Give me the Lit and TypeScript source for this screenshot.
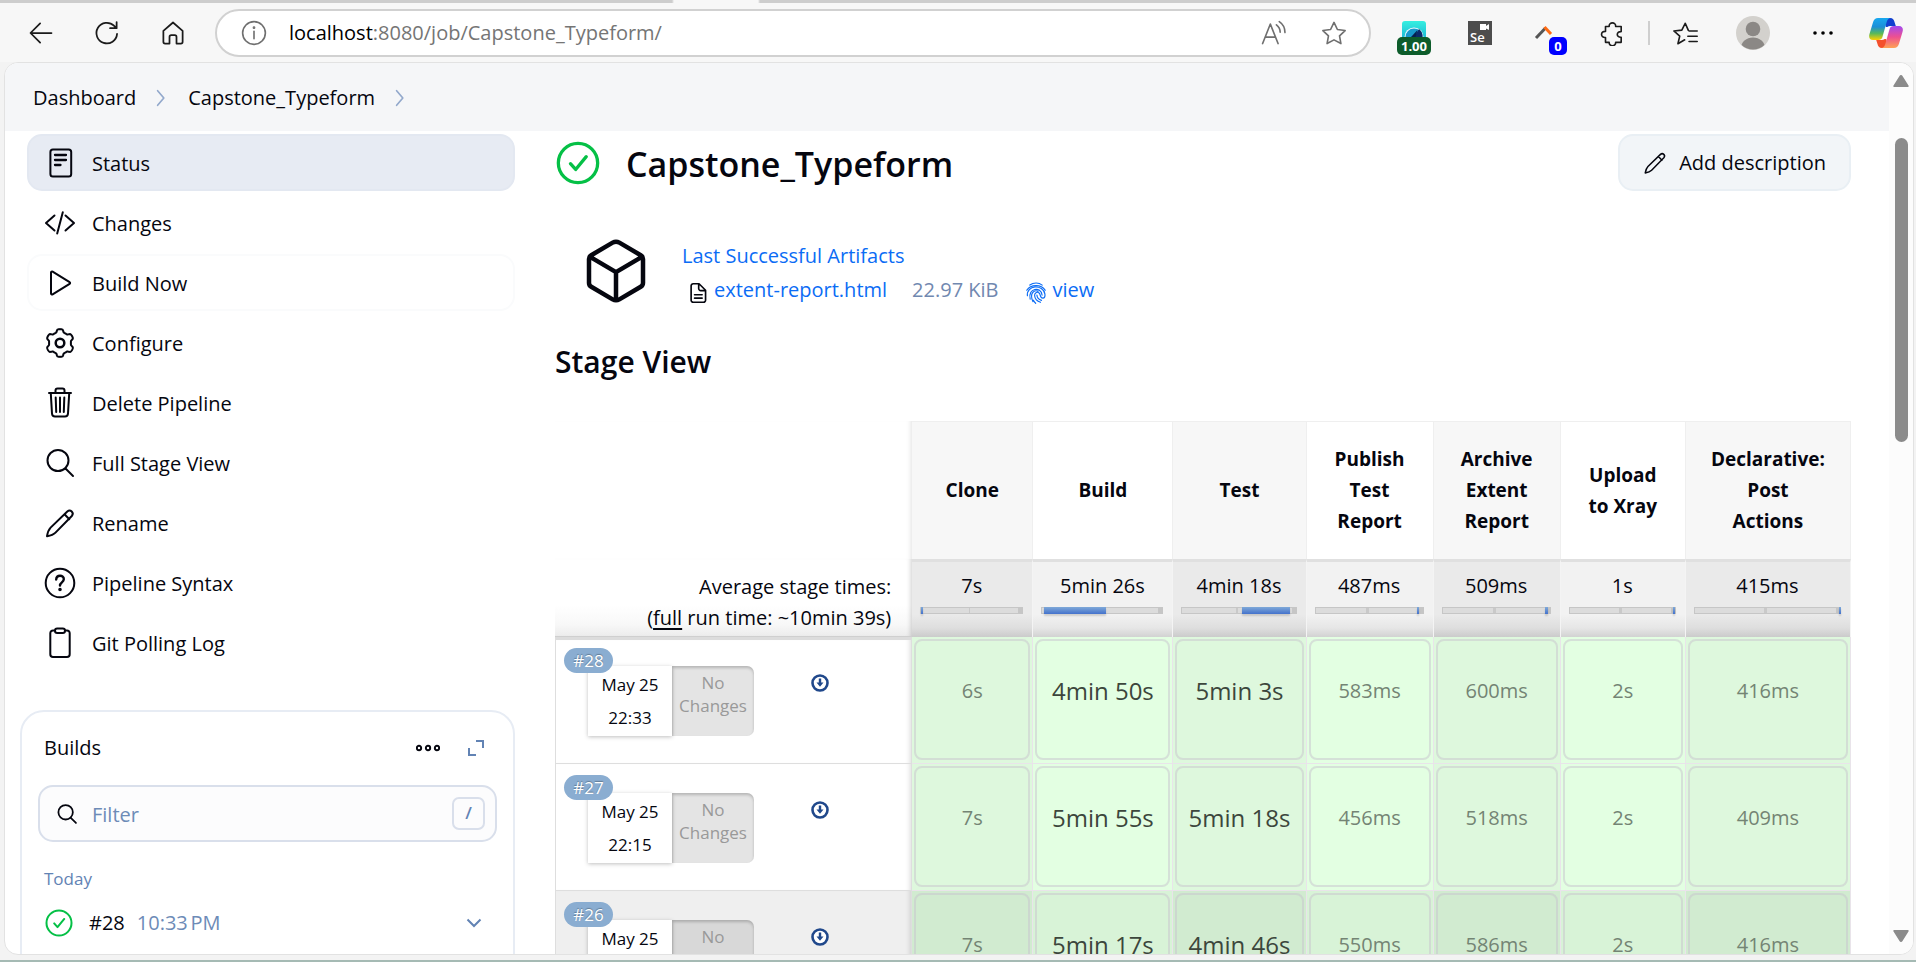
import { LitElement, html, svg, css } from "lit";
import { customElement } from "lit/decorators.js";
import { classMap } from "lit/directives/class-map.js";
import { styleMap } from "lit/directives/style-map.js";

const gearPath = (() => {
  const points: string[] = [];
  for (let i = 0; i < 180; i++) {
    const a = (i / 180) * Math.PI * 2;
    const r = 12.4 + 1.5 * Math.tanh(2.4 * Math.cos(6 * a));
    points.push(`${(16 + r * Math.sin(a)).toFixed(2)} ${(16 - r * Math.cos(a)).toFixed(2)}`);
  }
  return `M${points.join("L")}Z`;
})();

const glyphs: Record<string, unknown> = {
  status: svg`<rect x="6.4" y="2.5" width="20.8" height="27" rx="2.5"/><path d="M11 8h11M11 13h11M11 18h5.500" stroke-width="2.3"/>`,
  changes: svg`<path d="M10.5 8.5 2 16l8.500 7.500M21.500 8.500 30 16l-8.500 7.500M18.800 5.200 13.200 26.500"/>`,
  play: svg`<path d="M7 5.500v21c0 .9.9 1.300 1.600.900l17-10.600c.7-.4.7-1.300 0-1.700L8.600 4.600C7.900 4.200 7 4.700 7 5.500z"/>`,
  gear: svg`<path d=${gearPath}/><circle cx="16" cy="16" r="4.300" stroke-width="2.500"/>`,
  trash: svg`<path d="M5 6h22M11.500 5.500V3.500c0-1.200.8-2 2-2h5c1.200 0 2 .8 2 2v2" /><path d="M6.800 6.500 8 26.500c.1 1.800 1.200 3 3 3h10c1.800 0 2.900-1.200 3-3l1.200-20M11.700 10.500l.5 14.500M16 10.500V25M20.300 10.500l-.5 14.500"/>`,
  search: svg`<circle cx="14" cy="13.500" r="10.500"/><path d="m21.500 21.500 7.500 7.500"/>`,
  pencil: svg`<path d="M23.300 4.500c3.100-2.700 7.200 1.300 4.500 4.500L11.500 25.600c-2 2-5 3-8.500 3.600.6-3.700 1.600-6.500 3.600-8.600zM20.500 7.300l4.800 4.900"/>`,
  help: svg`<circle cx="16" cy="16" r="14.300"/><path d="M12.200 12.500c.2-5.200 7.800-4.900 7.600-.2-.1 3-3.800 3.100-3.800 6.200" stroke-width="2.400"/><circle cx="16" cy="22.500" r=".8" fill="currentColor"/>`,
  clipboard: svg`<path d="M11 3.500H9c-1.600 0-2.700 1-2.700 2.700v21c0 1.700 1.100 2.800 2.700 2.800h14c1.600 0 2.700-1.100 2.700-2.800v-21c0-1.700-1.100-2.700-2.700-2.700h-2"/><rect x="11" y="1.500" width="10" height="4.500" rx="2.200"/>`,
  check: svg`<circle cx="16" cy="16" r="14.300"/><path d="m10.500 16.500 3.800 4.200 7.700-9.300"/>`,
  cube: svg`<path d="M28 21.300V10.700a2 2 0 0 0-1-1.700L17.500 3.400a3 3 0 0 0-3 0L5 9a2 2 0 0 0-1 1.700v10.600A2 2 0 0 0 5 23l9.500 5.600a3 3 0 0 0 3 0L27 23a2 2 0 0 0 1-1.700zM4.300 9.600 16 16.500l11.700-6.900M16 29V16.500"/>`,
  file: svg`<path d="M6 5.500A3 3 0 0 1 9 2.500h8.500L27 12v14.500a3 3 0 0 1-3 3H9a3 3 0 0 1-3-3zM17 3v6.500a3 3 0 0 0 3 3h6.500M11 18.500h11M11 23.500h11"/>`,
  finger: svg`<path d="M7 4.500c5.500-4 13-4 18 0M2.500 12C8.500 3 23.500 3 29.500 12M3.500 20c-2-15.500 23-17.500 25.500-2.500.5 4-.8 6-3 6-4.500 0-2.800-5-5.500-7.500-3-2.500-7 0-6.500 4 .6 5 3.500 8 8.500 9.500M7.500 25c-4-16.500 16-19 17.300-6M11.500 28.500c-5.500-12.500 2-17.500 7.500-15M17.300 19c.3 4 2.700 6.700 6.700 7.700M15.500 31c-1.500-1.300-2.500-2.800-3.300-4.500"/>`,
  chevron: svg`<path d="m10 3 11 13-11 13"/>`,
  down: svg`<path d="m3 9 13 13L29 9"/>`,
  expand: svg`<path d="M16 2h14v14M2 16v14h14"/>`,
  dots: svg`<circle cx="4" cy="16" r="2.900"/><circle cx="16" cy="16" r="2.900"/><circle cx="28" cy="16" r="2.900"/>`,
  back: svg`<path d="M28 16H5M15 5 4 16l11 11"/>`,
  reload: svg`<path d="M27.500 17A11.800 11.800 0 1 1 24 7.700l3 2.800M27 3.500v7h-7.500"/>`,
  home: svg`<path d="M5 13.500 16 4l11 9.500V26c0 1-.8 2-2 2h-5v-7.500c0-1-.8-2-2-2h-4c-1.200 0-2 1-2 2V28H7c-1.200 0-2-1-2-2z"/>`,
  info: svg`<circle cx="16" cy="16" r="14"/><path d="M16 14v9"/><circle cx="16" cy="9.500" r=".7" fill="currentColor"/>`,
  aloud: svg`<path d="M2 29 11.500 5 21 29M5.500 21h12M19 6c3 2.400 4.600 5.500 4.600 9M22.500 2c4.500 3 7 8 7 13.500"/>`,
  star: svg`<path d="m16 3 4.200 8.700 9.500 1.300-6.900 6.600 1.700 9.400L16 24.500 7.500 29l1.700-9.400L2.300 13l9.500-1.300z"/>`,
  puzzle: svg`<path d="M8 8h4.500c-.5-6 8.500-6 8 0h6.800v6.300c-6.400-.6-6.400 7.500 0 6.900V27.500h-6.800c.5 5.500-8.500 5.500-8 0H8v-6c-6.500.6-6.500-8 0-7.500z"/>`,
  favs: svg`<path d="M20 12.500 16.300 4l-4.200 8.500-9.800 1 7.200 6.300-2.200 9.400 8.300-4.800M21 13.500h10M19.500 20H31M21 26.500h10"/>`,
};

const icon = (name: string, size: string) =>
  html`<svg class="icon ${size}" viewBox="0 0 32 32" aria-hidden="true">${glyphs[name]}</svg>`;

const tasks = [
  { icon: "status", label: "Status", state: "active" },
  { icon: "changes", label: "Changes", state: "" },
  { icon: "play", label: "Build Now", state: "focus" },
  { icon: "gear", label: "Configure", state: "" },
  { icon: "trash", label: "Delete Pipeline", state: "" },
  { icon: "search", label: "Full Stage View", state: "" },
  { icon: "pencil", label: "Rename", state: "" },
  { icon: "help", label: "Pipeline Syntax", state: "" },
  { icon: "clipboard", label: "Git Polling Log", state: "" },
];

const stages = [
  { name: "Clone", width: 121, avg: "7s", start: 0, share: 1 },
  { name: "Build", width: 140, avg: "5min 26s", start: 1, share: 54 },
  { name: "Test", width: 133, avg: "4min 18s", start: 55, share: 44 },
  { name: "Publish\nTest\nReport", width: 127, avg: "487ms", start: 98, share: 1 },
  { name: "Archive\nExtent\nReport", width: 127, avg: "509ms", start: 99, share: 3 },
  { name: "Upload\nto Xray", width: 125, avg: "1s", start: 102, share: 1 },
  { name: "Declarative:\nPost\nActions", width: 165, avg: "415ms", start: 102, share: 1 },
];

const runs = [
  { id: "#28", date: "May 25", time: "22:33", dim: false, cells: ["6s", "4min 50s", "5min 3s", "583ms", "600ms", "2s", "416ms"] },
  { id: "#27", date: "May 25", time: "22:15", dim: false, cells: ["7s", "5min 55s", "5min 18s", "456ms", "518ms", "2s", "409ms"] },
  { id: "#26", date: "May 25", time: "21:54", dim: true, cells: ["7s", "5min 17s", "4min 46s", "550ms", "586ms", "2s", "416ms"] },
];

const base = css`
  :host, * { box-sizing: border-box; }
  button, input { font: inherit; color: inherit; margin: 0; }
  button { background: none; border: 0; padding: 0; }
  a { color: inherit; text-decoration: none; }
  .icon { display: block; flex: none; fill: none; stroke: currentColor; stroke-width: 2; stroke-linecap: round; stroke-linejoin: round; }
  .s16 { width: 16px; height: 16px; stroke-width: 4; stroke-linecap: butt; stroke-linejoin: miter; }
  .s20 { width: 20px; height: 20px; stroke-width: 3; }
  .s22 { width: 22px; height: 22px; }
  .s24 { width: 24px; height: 24px; }
  .s26 { width: 26px; height: 26px; }
  .s28 { width: 28px; height: 28px; }
  .s32 { width: 32px; height: 32px; }
  .s44 { width: 44px; height: 44px; }
  .s72 { width: 72px; height: 72px; }
`;

@customElement("browser-bar")
export class BrowserBar extends LitElement {
  static styles = [base, css`
    :host { display: block; background: #f7f7f7; color: #1b1b1b; }
    .strip { height: 3px; background: linear-gradient(90deg, #cdcdcd 672px, #f7f7f7 674px 758px, #cdcdcd 760px); }
    .bar { display: flex; align-items: center; height: 59px; padding: 1px 2px 0 20px; }
    .nav { display: flex; gap: 24px; margin-right: 21px; }
    .nav button { width: 42px; height: 42px; display: grid; place-items: center; }
    .address { flex: 1; min-width: 0; display: flex; align-items: center; height: 48px; padding: 0 22px 0 24px; border: 2px solid #d1d1d1; border-radius: 24px; background: #fff; color: #6f6f6f; margin-right: 10px; }
    .address .icon { stroke-width: 2; }
    .url { flex: 1; min-width: 0; margin-left: 22px; font-size: 20px; line-height: 30px; color: #757575; white-space: nowrap; }
    .url b { font-weight: 400; color: #000; }
    .tools { display: flex; gap: 34px; }
    .ext { display: flex; align-items: center; height: 48px; }
    .ext button { position: relative; width: 66px; height: 42px; display: grid; place-items: center; }
    .ext .wide { width: 70px; }
    .ext .last { width: 56px; }
    .rule { width: 2px; height: 24px; margin: 0 2px 0 3px; background: #cfcfcf; }
    .badge { position: absolute; top: 25px; left: 16px; width: 34px; height: 18px; border-radius: 5px; background: #0d5c2b; color: #fff; font: 700 13px/18px "Open Sans", sans-serif; text-align: center; }
    .badge.blue { left: 36px; width: 18px; background: #00f; }
    .se { width: 24px; height: 24px; background: #4d4d4d; color: #fff; font: 600 13px/15px "Open Sans", sans-serif; padding-top: 9px; text-align: left; padding-left: 2px; position: relative; }
    .cam { position: absolute; right: 3px; top: 3px; width: 9px; height: 6px; }
    .avatar { width: 34px; height: 34px; }
  `];

  render() {
    return html`
      <div class="strip"></div>
      <div class="bar">
        <nav class="nav" aria-label="Browser">
          <button aria-label="Back">${icon("back", "s28")}</button>
          <button aria-label="Refresh">${icon("reload", "s28")}</button>
          <button aria-label="Home">${icon("home", "s28")}</button>
        </nav>
        <div class="address">
          ${icon("info", "s26")}
          <span class="url"><b>localhost</b>:8080/job/Capstone_Typeform/</span>
          <span class="tools">
            <button aria-label="Read aloud">${icon("aloud", "s26")}</button>
            <button aria-label="Add to favorites">${icon("star", "s26")}</button>
          </span>
        </div>
        <div class="ext">
          <button aria-label="Speed">
            <svg class="s24" viewBox="0 0 24 24"><defs><linearGradient id="sp" x1="0" y1="0" x2="0" y2="1"><stop offset="0" stop-color="#35efe0"/><stop offset="1" stop-color="#14a5d0"/></linearGradient></defs><rect width="24" height="24" rx="3" fill="url(#sp)"/><circle cx="12" cy="16" r="9.500" fill="#f4fbff"/><circle cx="12" cy="16" r="8.500" fill="#1899cc"/><path d="M12 16 17 8a9 9 0 0 1 3.500 8z" fill="#0b2a6b"/><path d="m9 16 6.500-7-2 7z" fill="#062050"/></svg>
            <span class="badge">1.00</span>
          </button>
          <button aria-label="Selenium IDE"><span class="se">Se<svg class="cam" viewBox="0 0 9 6"><path d="M0 0h6v2l3-2v6L6 4.500V6H0z" fill="#fff"/></svg></span></button>
          <button aria-label="Locator">
            <svg class="s24" viewBox="0 0 24 24" fill="none" stroke-width="3"><path d="m2 17 9.500-10" stroke="#555"/><path d="m10.500 6 6.500 7" stroke="#ff6a13"/></svg>
            <span class="badge blue">0</span>
          </button>
          <button aria-label="Extensions">${icon("puzzle", "s26")}</button>
          <span class="rule"></span>
          <button aria-label="Favorites">${icon("favs", "s26")}</button>
          <button class="wide" aria-label="Profile">
            <svg class="avatar" viewBox="0 0 34 34"><defs><clipPath id="av"><circle cx="17" cy="17" r="16.500"/></clipPath></defs><circle cx="17" cy="17" r="17" fill="#d3d1cd"/><circle cx="17" cy="13" r="7.300" fill="#8b8885"/><ellipse cx="17" cy="32" rx="12" ry="10.500" fill="#8b8885" clip-path="url(#av)"/></svg>
          </button>
          <button class="wide" aria-label="Settings and more">
            <svg class="s24" viewBox="0 0 24 24"><circle cx="4" cy="12" r="1.800"/><circle cx="12" cy="12" r="1.800"/><circle cx="20" cy="12" r="1.800"/></svg>
          </button>
          <button class="last" aria-label="Copilot">
            <svg class="avatar" viewBox="0 0 34 34">
              <defs>
                <linearGradient id="c1" x1="0" y1="0" x2="0" y2="1"><stop offset="0" stop-color="#18a8ef"/><stop offset=".4" stop-color="#1b8fd8"/><stop offset=".7" stop-color="#58b95a"/><stop offset="1" stop-color="#ffd000"/></linearGradient>
                <linearGradient id="c2" x1="0" y1="0" x2="0" y2="1"><stop offset="0" stop-color="#a349f0"/><stop offset=".5" stop-color="#ee5090"/><stop offset="1" stop-color="#ffa254"/></linearGradient>
              </defs>
              <path d="M14 2h7c3 0 4 2 4.500 4l1.300 4H21c-2 0-3 1-3.500 3z" fill="#1140cf"/>
              <path d="M20 32h-7c-3 0-4-2-4.500-4l-1.300-4H13c2 0 3-1 3.500-3z" fill="#f4502c"/>
              <path d="M9 2h12c-2 .5-3 2.500-3.600 5l-4 14c-.7 2.200-2 3-4 3H4c-3.500 0-4.500-3-3.500-6l3.600-12C5 3.500 6.500 2 9 2z" fill="url(#c1)"/>
              <path d="M25 32H13c2-.5 3-2.500 3.600-5l4-14c.7-2.200 2-3 4-3H30c3.500 0 4.500 3 3.500 6l-3.600 12c-.9 2.500-2.400 4-4.900 4z" fill="url(#c2)"/>
              <path d="m17 11h3.500l-3.500 12h-3.500z" fill="#fff"/>
            </svg>
          </button>
        </div>
      </div>`;
  }
}

@customElement("side-panel")
export class SidePanel extends LitElement {
  static styles = [base, css`
    :host { display: flex; flex-direction: column; gap: 39px; font-size: 20px; line-height: 30px; }
    .tasks { display: flex; flex-direction: column; gap: 3px; margin-left: 7px; }
    .task { display: flex; align-items: center; gap: 16px; height: 57px; padding: 0 15px; border: 2px solid transparent; border-radius: 15px; }
    .task span { padding-top: 2px; }
    .task.active { background: #e7ebf3; border-color: #e3e8f1; }
    .task.focus { border-color: #fafbfc; }
    .builds { border: 2px solid #e7ecf4; border-radius: 24px; padding: 18px 16px; height: 300px; }
    .head { display: flex; align-items: center; padding: 0 13px 0 6px; height: 36px; }
    .head h2 { flex: 1; margin: 0; font-size: 20px; font-weight: 400; line-height: 30px; }
    .more { margin-right: 28px; }
    .blue { color: #6283b4; }
    .filter { display: flex; align-items: center; gap: 14px; height: 57px; margin-top: 19px; padding: 0 10px 0 16px; border: 2px solid #d9dfeb; border-radius: 15px; background: #fcfcfd; }
    .filter input { flex: 1; min-width: 0; border: 0; outline: 0; background: none; padding: 2px 0 0; }
    .filter input::placeholder { color: #6d8bb7; opacity: 1; }
    .filter kbd { width: 33px; height: 33px; border: 2px solid #d9dfeb; border-radius: 7px; color: #6283b4; font: 600 17px/28px "Open Sans", sans-serif; text-align: center; }
    .day { margin: 24px 6px 0; font-size: 17px; line-height: 26px; color: #6283b4; }
    .build { display: flex; align-items: center; height: 57px; padding: 0 15px 0 7px; margin-top: 2px; }
    .build .id { margin-left: 16px; }
    .build time { flex: 1; margin-left: 12px; color: #6d8bb7; }
    .green { color: #05c046; }
    .build .s28 { stroke-width: 2.3; }
    .filter .s22, .more .s24 { stroke-width: 2.6; }
  `];

  render() {
    return html`
      <nav class="tasks">
        ${tasks.map((t) => html`
          <a href="#" class="task ${t.state}">${icon(t.icon, "s32")}<span>${t.label}</span></a>`)}
      </nav>
      <section class="builds">
        <div class="head">
          <h2>Builds</h2>
          <button class="more" aria-label="More">${icon("dots", "s24")}</button>
          <button class="blue" aria-label="Expand">${icon("expand", "s16")}</button>
        </div>
        <label class="filter">
          ${icon("search", "s22")}
          <input type="text" placeholder="Filter" aria-label="Filter builds" />
          <kbd>/</kbd>
        </label>
        <p class="day">Today</p>
        <div class="build">
          <span class="green">${icon("check", "s28")}</span>
          <a class="id" href="#">#28</a>
          <time>10:33&#x202f;PM</time>
          <button class="blue" aria-label="Build menu">${icon("down", "s16")}</button>
        </div>
      </section>`;
  }
}

@customElement("stage-view")
export class StageView extends LitElement {
  static styles = [base, css`
    :host { display: block; font-size: 20px; }
    table { width: 100%; table-layout: fixed; border-collapse: separate; border-spacing: 0; }
    .lead { width: 357px; }
    th, td { padding: 0; }
    .name { height: 138px; border: 1px solid #efefef; border-width: 1px 1px 0 0; font-weight: 700; font-size: 19px; line-height: 31px; white-space: pre-line; background: #fff; }
    .shade.name { background: #f7f7f7; }
    .avg { height: 78px; vertical-align: top; padding: 9px 9px 0 8px; text-align: center; line-height: 30px; border-top: 3px solid #e0e0e0; border-right: 1px solid #f4f4f4; background: linear-gradient(#f2f2f2 70%, #e6e6e6 88%, #d2d2d2); }
    .shade.avg { background: linear-gradient(#eaeaea 70%, #dedede 88%, #cbcbcb); }
    .track { position: relative; height: 7px; margin-top: 6px; border: 1px solid #c6c6c6; border-width: 1px 5px 1px 1px; background: linear-gradient(90deg, transparent 49%, #c9c9c9 49% 51%, transparent 51%), #dcdcdc; }
    .fill { position: absolute; top: -1px; height: 7px; min-width: 2px; background: linear-gradient(#7fa9d8, #4472cc); box-shadow: 0 2px 2px rgba(0, 0, 0, .15); }
    .legend { vertical-align: top; padding: 12px 21px 0 0; text-align: right; line-height: 31px; font-weight: 400; border-bottom: 1px solid #cfcfcf; background: linear-gradient(#fff 60%, #f8f8f8 85%, #ececec); box-shadow: inset -5px 0 5px -4px rgba(0, 0, 0, .2); }
    .top { box-shadow: inset -5px 0 5px -4px rgba(0, 0, 0, .12); }
    .run { height: 127px; vertical-align: top; font-weight: 400; border: 1px solid #dedede; border-top-width: 0; box-shadow: inset -5px 0 5px -4px rgba(0, 0, 0, .15); background: #fff; }
    .first .run { border-top: 3px solid #dcdcdc; }
    .first .info { padding-top: 26px; }
    .dim .run { background: #efefef; }
    .info { display: flex; padding: 29px 0 0 32px; font-size: 17px; }
    .when { position: relative; width: 84px; height: 70px; padding-top: 2px; text-align: center; line-height: 33px; background: #fff; box-shadow: 0 1px 4px rgba(0, 0, 0, .25); }
    .when time { display: block; }
    .id { position: absolute; left: -24px; top: -18px; width: 49px; height: 25px; border-radius: 13px; background: #8aadd1; color: #fff; line-height: 25px; text-shadow: 0 -1px 1px rgba(0, 0, 0, .3); }
    .none { width: 82px; height: 70px; padding-top: 5px; text-align: center; line-height: 23px; color: #999; background: #e4e4e4; border-radius: 0 7px 7px 0; box-shadow: inset 0 2px 3px rgba(0, 0, 0, .2); }
    .dim .none { background: #d8d8d8; }
    .get { margin: 8px 0 0 57px; height: 18px; }
    .get svg { display: block; width: 18px; height: 18px; }
    .cell { padding: 2px 2px 3px 2px; background: #e3ffe2; border-right: 1px solid #e9e4ea; border-bottom: 1px solid #e9e4ea; }
    .shade.cell { background: #def8dd; }
    .dim .cell { background: #d8f3d7; }
    .dim .shade.cell { background: #d1ebd0; }
    .box { height: 121px; padding-top: 35px; text-align: center; line-height: 30px; color: #748474; border: 2px solid rgba(200, 195, 205, .5); border-radius: 8px; }
    .big { font-size: 24px; color: #3c463c; }
    u { text-underline-offset: 3px; text-decoration-thickness: 2px; }
  `];

  render() {
    return html`
      <table>
        <colgroup>
          <col class="lead" />
          ${stages.map((s) => html`<col style=${styleMap({ width: `${s.width}px` })} />`)}
        </colgroup>
        <thead>
          <tr>
            <td class="top"></td>
            ${stages.map((s, i) => html`
              <th class=${classMap({ name: true, shade: i % 2 === 0 })} scope="col">${s.name}</th>`)}
          </tr>
          <tr>
            <th class="legend" scope="row">Average stage times:<br />(<u>full</u> run time: ~10min 39s)</th>
            ${stages.map((s, i) => html`
              <td class=${classMap({ avg: true, shade: i % 2 === 0 })}>
                ${s.avg}
                <div class="track"><div class="fill" style=${styleMap({ left: `${s.start}%`, width: `${s.share}%` })}></div></div>
              </td>`)}
          </tr>
        </thead>
        <tbody>
          ${runs.map((r, n) => html`
            <tr class=${classMap({ dim: r.dim, first: n === 0 })}>
              <th class="run" scope="row">
                <div class="info">
                  <div class="when"><span class="id">${r.id}</span><time>${r.date}</time><time>${r.time}</time></div>
                  <div class="none">No<br />Changes</div>
                  <a class="get" href="#" aria-label="Artifacts">
                    <svg viewBox="0 0 18 18"><circle cx="9" cy="9" r="7.500" fill="#fff" stroke="#20488b" stroke-width="2.600"/><path d="M7.800 4.500h2.400V8.500h2.300L9 12.800 5.500 8.500h2.300z" fill="#20488b"/></svg>
                  </a>
                </div>
              </th>
              ${r.cells.map((c, i) => html`
                <td class=${classMap({ cell: true, shade: i % 2 === 0 })}>
                  <div class=${classMap({ box: true, big: c.includes("min") })}>${c}</div>
                </td>`)}
            </tr>`)}
        </tbody>
      </table>`;
  }
}

@customElement("app-root")
export class AppRoot extends LitElement {
  static styles = [base, css`
    :host { display: flex; flex-direction: column; height: 100vh; overflow: hidden; background: #f3f3f3; color: #05060f; font-family: "Open Sans", "Noto Sans", sans-serif; font-size: 20px; line-height: 30px; border-bottom: 2px solid #a5bab4; }
    .frame { flex: 1; min-height: 0; display: flex; margin: 0 2px 5px 4px; border: 1px solid #e2e2e2; border-radius: 14px; overflow: hidden; background: #fff; }
    .page { flex: 1; min-width: 0; overflow: hidden; }
    .crumbs { display: flex; align-items: center; height: 68px; padding: 2px 28px 0; background: #f5f6f8; }
    .crumbs svg { color: #93a9cc; margin: 0 18px 0 16px; width: 18px; height: 22px; stroke-width: 3; }
    .body { display: grid; grid-template-columns: 495px minmax(0, 1fr); gap: 40px; padding: 3px 38px 0 15px; }
    .title { display: flex; align-items: center; height: 57px; }
    .title .icon.s44 { color: #05c046; stroke-width: 2.4; margin-left: 1px; }
    h1 { flex: 1; margin: 0 0 0 26px; padding-top: 2px; font-size: 34px; line-height: 44px; font-weight: 600; }
    .add { display: flex; align-items: center; gap: 12px; height: 57px; padding: 0 23px; border: 2px solid #e9eff4; border-radius: 15px; background: #f2f5f8; }
    .art { display: flex; gap: 30px; margin: 44px 0 0 25px; }
    .art .s72 { stroke-width: 2; }
    .text { padding-top: 4px; }
    .line { display: flex; align-items: center; height: 34px; }
    .line a { color: #0b6cf5; }
    .line .s20 { margin: 5px 5px 0 5px; width: 22px; height: 24px; stroke-width: 2.4; }
    .size { margin: 0 22px 0 25px; color: #7188b0; }
    .line .blue { display: flex; align-items: center; }
    .line .blue .s20 { stroke-width: 1.7; }
    h2 { margin: 34px 0 38px; font-size: 30px; line-height: 42px; font-weight: 600; }
    .scroll { width: 24px; background: #fcfcfc; display: flex; flex-direction: column; align-items: center; padding: 12px 0 11px; }
    .scroll svg { width: 16px; height: 13px; fill: #8b8b8b; display: block; }
    .thumb { width: 13px; height: 35%; margin: 50px 0 auto; border-radius: 7px; background: #8b8b8b; }
  `];

  render() {
    return html`
      <browser-bar></browser-bar>
      <div class="frame">
        <div class="page">
          <nav class="crumbs" aria-label="Breadcrumb">
            <a href="#">Dashboard</a>${icon("chevron", "s24")}<a href="#">Capstone_Typeform</a>${icon("chevron", "s24")}
          </nav>
          <div class="body">
            <side-panel></side-panel>
            <main>
              <div class="title">
                ${icon("check", "s44")}
                <h1>Capstone_Typeform</h1>
                <button class="add">${icon("pencil", "s24")}Add description</button>
              </div>
              <div class="art">
                ${icon("cube", "s72")}
                <div class="text">
                  <div class="line"><a href="#">Last Successful Artifacts</a></div>
                  <div class="line">
                    ${icon("file", "s20")}<a href="#">extent-report.html</a>
                    <span class="size">22.97 KiB</span>
                    <a class="blue" href="#">${icon("finger", "s20")}view</a>
                  </div>
                </div>
              </div>
              <h2>Stage View</h2>
              <stage-view></stage-view>
            </main>
          </div>
        </div>
        <div class="scroll" aria-hidden="true">
          <svg viewBox="0 0 16 13"><path d="M8 0c.7 0 1.200.4 1.500.9l6 9.600c.6 1 0 1.500-1 1.500h-13c-1 0-1.600-.5-1-1.500l6-9.600C6.800.4 7.300 0 8 0z"/></svg>
          <div class="thumb"></div>
          <svg viewBox="0 0 16 13"><path d="M8 12c.7 0 1.200-.4 1.500-.9l6-9.600c.6-1 0-1.500-1-1.500h-13c-1 0-1.600.5-1 1.500l6 9.600c.3.500.8.900 1.500.900z"/></svg>
        </div>
      </div>`;
  }
}
